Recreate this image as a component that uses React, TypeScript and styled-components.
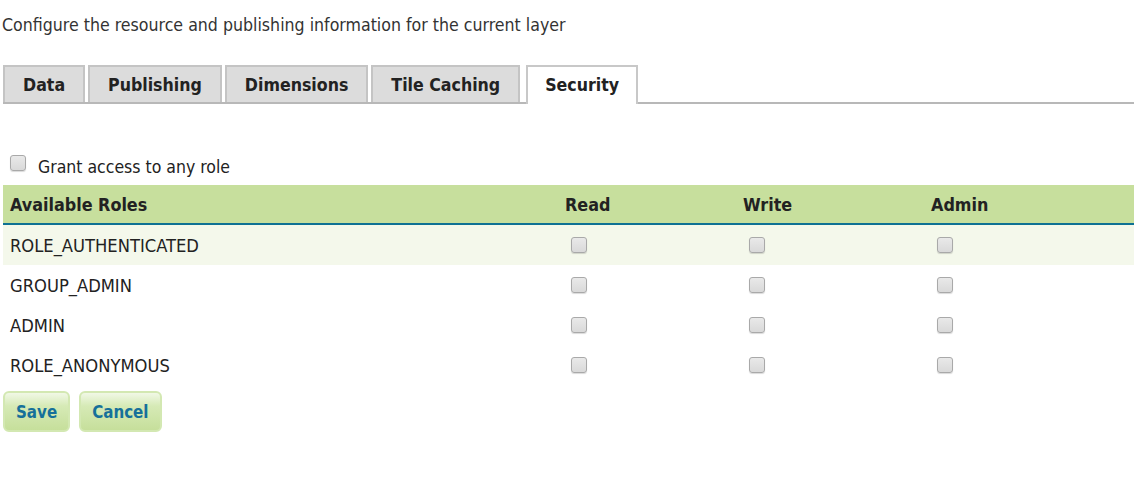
import React from "react";
import styled, { createGlobalStyle } from "styled-components";

const GlobalStyle = createGlobalStyle`
  html, body { margin: 0; padding: 0; background: #fff; }
  body {
    font-family: "DejaVu Sans Condensed", "DejaVu Sans", sans-serif;
    font-size: 17.6px;
    color: #222;
  }
`;

const Page = styled.div`
  padding: 0 0 0 3px;
`;

const Intro = styled.p`
  margin: 0 0 0 -1px;
  padding-top: 14px;
  line-height: 22px;
  font-size: 17.6px;
  color: #333;
`;

const TabBar = styled.div`
  display: flex;
  gap: 3px;
  margin-top: 29px;
  border-bottom: 2px solid #b8b8b8;
  height: 37px;
`;

const Tab = styled.div<{ $active?: boolean }>`
  box-sizing: border-box;
  height: ${(p) => (p.$active ? "39px" : "37px")};
  margin-left: ${(p) => (p.$active ? "3px" : "0")};
  padding: 0 ${(p) => (p.$active ? "17px" : "18px")} ${(p) => (p.$active ? "2px" : "0")};
  display: flex;
  align-items: center;
  font-weight: bold;
  font-size: 17.6px;
  color: #222;
  background: ${(p) => (p.$active ? "#fff" : "#dcdcdc")};
  border: 2px solid ${(p) => (p.$active ? "#c8c8c8" : "#c4c4c4")};
  border-bottom: 0;
`;

const GrantRow = styled.label`
  display: flex;
  align-items: center;
  gap: 12px;
  margin-top: 51px;
  padding-left: 7px;
  height: 24px;
  font-size: 17.5px;
  color: #222;
`;

const Box = styled.span`
  display: inline-block;
  box-sizing: border-box;
  width: 16px;
  height: 16px;
  border: 1px solid #a9a9a9;
  border-radius: 3px;
  background: linear-gradient(#e9e9e9, #d9d9d9);
  box-shadow: 0 1px 1px rgba(0, 0, 0, 0.15);
  flex: none;
`;

const GrantBox = styled(Box)`
  margin-top: -8px;
`;

const Table = styled.div`
  margin-top: 6px;
  display: grid;
  grid-template-columns: 555px 178px 188px 1fr;
`;

const HeadCell = styled.div`
  height: 38px;
  background: #c7df9d;
  border-bottom: 2px solid #0e7193;
  display: flex;
  align-items: center;
  padding-left: 7px;
  font-weight: bold;
  font-size: 17.8px;
  color: #222;
`;

const Cell = styled.div<{ $odd: boolean }>`
  height: 40px;
  display: flex;
  align-items: center;
  padding-left: 7px;
  background: ${(p) => (p.$odd ? "#f4f8eb" : "#fff")};
  font-size: 18.2px;
  color: #222;
`;

const CheckCell = styled(Cell)`
  padding-left: 13px;
  box-sizing: border-box;
`;

const Buttons = styled.div`
  display: flex;
  gap: 9px;
  margin-top: 6px;
`;

const Button = styled.button`
  box-sizing: border-box;
  height: 41px;
  padding: 0 11px;
  border: 2px solid #d3e8b2;
  border-radius: 6px;
  background: linear-gradient(#f1f8e6 0%, #d6eab6 35%, #c6df9b 100%);
  color: #16709a;
  font-family: "DejaVu Sans Condensed", "DejaVu Sans", sans-serif;
  font-weight: bold;
  font-size: 16.8px;
  cursor: pointer;
`;

const roles = ["ROLE_AUTHENTICATED", "GROUP_ADMIN", "ADMIN", "ROLE_ANONYMOUS"];
const tabs = ["Data", "Publishing", "Dimensions", "Tile Caching", "Security"];

export default function App() {
  return (
    <>
      <GlobalStyle />
      <Page>
        <Intro>Configure the resource and publishing information for the current layer</Intro>
        <TabBar>
          {tabs.map((t) => (
            <Tab key={t} $active={t === "Security"}>
              {t}
            </Tab>
          ))}
        </TabBar>
        <GrantRow>
          <GrantBox />
          Grant access to any role
        </GrantRow>
        <Table>
          <HeadCell>Available Roles</HeadCell>
          <HeadCell>Read</HeadCell>
          <HeadCell>Write</HeadCell>
          <HeadCell>Admin</HeadCell>
          {roles.map((r, i) => (
            <React.Fragment key={r}>
              <Cell $odd={i === 0}>{r}</Cell>
              <CheckCell $odd={i === 0}>
                <Box />
              </CheckCell>
              <CheckCell $odd={i === 0}>
                <Box />
              </CheckCell>
              <CheckCell $odd={i === 0}>
                <Box />
              </CheckCell>
            </React.Fragment>
          ))}
        </Table>
        <Buttons>
          <Button>Save</Button>
          <Button>Cancel</Button>
        </Buttons>
      </Page>
    </>
  );
}
